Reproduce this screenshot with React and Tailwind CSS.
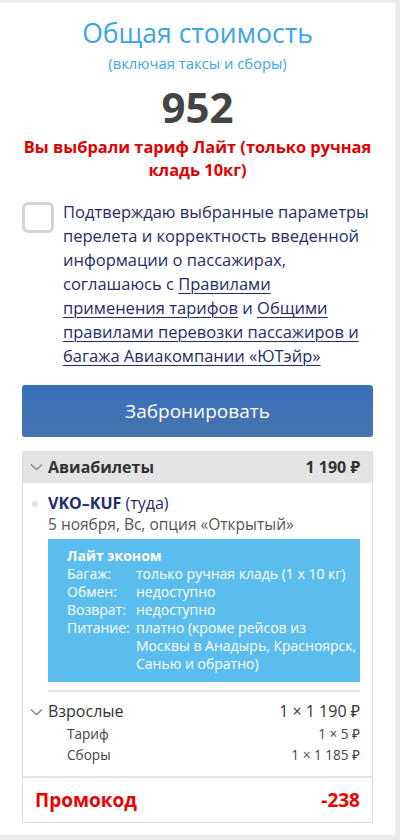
const Chevron = () => (
    <svg width="13" height="8" viewBox="0 0 13 8" className="shrink-0">
        <path d="M1 1.5 L6.5 6.5 L12 1.5" fill="none" stroke="#888" strokeWidth="1.4" />
    </svg>
)

const App = () => {
    return (
        <div className="min-h-[840px] bg-[#ececec] pt-[3px]" style={{ fontFamily: '"Open Sans", "Noto Sans", sans-serif' }}>
            <div className="w-[395px] h-[832px] bg-white pt-[14px]">
                <h1 className="text-center text-[26.5px] leading-[32px] text-[#3aa5ea]">Общая стоимость</h1>
                <p className="text-center text-[14.8px] leading-[18px] text-[#3aa5ea] mt-[5px]">(включая таксы и сборы)</p>
                <p className="text-center text-[42px] leading-[52px] font-bold text-[#444] mt-[9px]">952</p>
                <p className="text-center text-[16.4px] leading-[23px] font-bold text-[#e00000] px-5 mt-[2px]">
                    Вы выбрали тариф Лайт (только ручная кладь 10кг)
                </p>

                <div className="flex gap-[9px] pl-[22px] pr-[20px] mt-[19px]">
                    <div className="w-[32px] h-[31px] shrink-0 rounded-[6px] border-[3px] border-[#d3d3d3] mt-[2px]"></div>
                    <p className="text-[16.5px] leading-[24px] text-[#1f2d6b]">
                        Подтверждаю выбранные параметры перелета и корректность введенной информации о пассажирах, соглашаюсь с{" "}
                        <span className="underline decoration-1 underline-offset-[3px]">Правилами применения тарифов</span> и{" "}
                        <span className="underline decoration-1 underline-offset-[3px]">Общими правилами перевозки пассажиров и багажа Авиакомпании «ЮТэйр»</span>
                    </p>
                </div>

                <div className="px-[22px] mt-[17px]">
                    <button className="w-full h-[52px] rounded-[3px] bg-gradient-to-b from-[#3a70ba] to-[#4573af] text-white text-[19px]">Забронировать</button>
                </div>

                <div className="mx-[22px] mt-[14px] border border-[#dcdcdc] border-t-0">
                    <div className="h-[32px] bg-[#e4e4e4] flex items-center pl-[7px] pr-[12px]">
                        <Chevron />
                        <span className="ml-[5px] text-[16px] font-bold text-[#333]">Авиабилеты</span>
                        <span className="ml-auto text-[16px] font-bold text-[#333]">1 190 ₽</span>
                    </div>

                    <div className="pl-[25px] pr-[12px] pt-[9px]">
                        <div className="relative">
                            <span className="absolute -left-[16px] top-[9px] w-[6px] h-[6px] rounded-full bg-[#e2e2e2]"></span>
                            <p className="text-[16px] leading-[22px] text-[#1f2d6b]"><b>VKO–KUF</b> (туда)</p>
                            <p className="text-[15.5px] leading-[20px] text-[#555]">5 ноября, Вс, опция «Открытый»</p>
                        </div>

                        <div className="mt-[5px] bg-[#5bbdee] text-white text-[14px] leading-[18px] pl-[19px] pr-0 pt-[8px] pb-[9px]">
                            <p className="font-bold">Лайт эконом</p>
                            <div className="grid grid-cols-[69px_1fr]">
                                <span>Багаж:</span><span>только ручная кладь (1 x 10 кг)</span>
                                <span>Обмен:</span><span>недоступно</span>
                                <span>Возврат:</span><span>недоступно</span>
                                <span>Питание:</span><span>платно (кроме рейсов из Москвы в Анадырь, Красноярск, Санью и обратно)</span>
                            </div>
                        </div>

                        <div className="mt-[8px] border-t-2 border-[#e8e8e8]"></div>

                        <div className="relative flex items-center mt-[8px] h-[22px]">
                            <span className="absolute -left-[18px] top-[8px]"><Chevron /></span>
                            <span className="text-[16px] text-[#333]">Взрослые</span>
                            <span className="ml-auto text-[16px] text-[#333]">1 × 1 190 ₽</span>
                        </div>
                        <div className="flex pl-[19px] text-[13.6px] leading-[21px] text-[#444] mt-[1px]">
                            <span>Тариф</span>
                            <span className="ml-auto">1 × 5 ₽</span>
                        </div>
                        <div className="flex pl-[19px] text-[13.6px] leading-[21px] text-[#444]">
                            <span>Сборы</span>
                            <span className="ml-auto">1 × 1 185 ₽</span>
                        </div>
                    </div>

                    <div className="mt-[11px] border-t-2 border-[#e4e4e4] flex items-center h-[46px] px-[12px]">
                        <span className="text-[19px] font-bold text-[#ee0000]">Промокод</span>
                        <span className="ml-auto text-[19px] font-bold text-[#ee0000]">-238</span>
                    </div>
                </div>
            </div>
        </div>
    );
};

export default App;
